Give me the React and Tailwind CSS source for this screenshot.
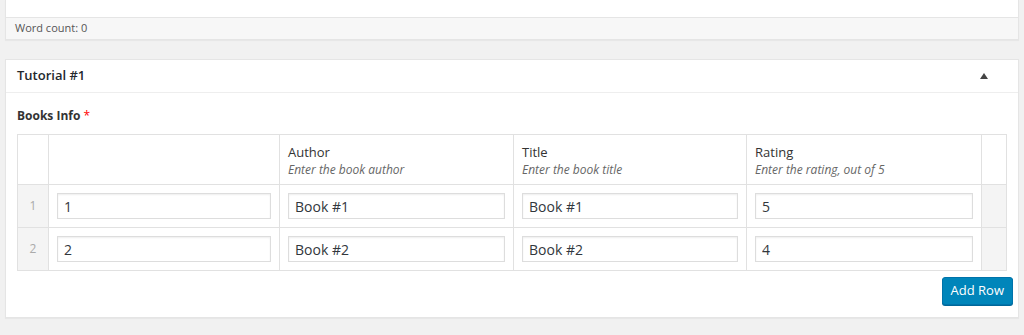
import React from "react";

const font = { fontFamily: '"Open Sans", "Noto Sans", sans-serif' };

function Cell({ value }) {
  return (
    <td className="border border-[#e1e1e1] px-[8px] py-[8px] align-middle">
      <input
        readOnly
        value={value}
        className="w-full h-[26px] border border-[#ddd] bg-white px-[6px] text-[14px] text-[#32373c] shadow-[inset_0_1px_2px_rgba(0,0,0,0.07)] outline-none"
        style={font}
      />
    </td>
  );
}

function HeadCell({ label, desc }) {
  return (
    <th className="border border-[#e1e1e1] px-[8px] pt-[8px] pb-[5px] text-left align-top font-normal bg-white">
      <div className="text-[13px] leading-[18px] text-[#333]">{label}</div>
      <div className="text-[12px] leading-[18px] italic text-[#666]">{desc}</div>
    </th>
  );
}

export default function App() {
  const rows = [
    ["1", "Book #1", "Book #1", "5"],
    ["2", "Book #2", "Book #2", "4"],
  ];
  return (
    <div className="w-[1024px] h-[335px] bg-[#f1f1f1] px-[5px] overflow-hidden" style={font}>
      <div className="bg-white border border-[#e5e5e5] border-t-0 shadow-[0_1px_1px_rgba(0,0,0,0.04)]">
        <div className="h-[17px]" />
        <div className="h-[22px] bg-[#f7f7f7] border-t border-[#e5e5e5] px-[9px] flex items-center text-[11px] text-[#555]">
          Word count: 0
        </div>
      </div>

      <div className="mt-[19px] bg-white border border-[#e5e5e5] shadow-[0_1px_1px_rgba(0,0,0,0.04)]">
        <div className="h-[33px] border-b border-[#eee] pl-[11px] pr-[30px] flex items-center justify-between">
          <span className="text-[13px] font-semibold text-[#23282d]">Tutorial #1</span>
          <span className="w-0 h-0 border-l-[4px] border-r-[4px] border-b-[6px] border-l-transparent border-r-transparent border-b-[#444]" />
        </div>
        <div className="px-[11px] pt-[15px]">
          <div className="text-[12px] font-bold text-[#333] leading-[16px] mb-[10px]">
            Books Info <span className="text-[#f00] font-normal">*</span>
          </div>
          <table className="w-[989px] table-fixed border-collapse border border-[#e1e1e1]">
            <colgroup>
              <col className="w-[31px]" />
              <col className="w-[231px]" />
              <col className="w-[234px]" />
              <col className="w-[233px]" />
              <col className="w-[235px]" />
              <col className="w-[25px]" />
            </colgroup>
            <thead>
              <tr className="h-[50px]">
                <th className="border border-[#e1e1e1] bg-white" />
                <th className="border border-[#e1e1e1] bg-white" />
                <HeadCell label="Author" desc="Enter the book author" />
                <HeadCell label="Title" desc="Enter the book title" />
                <HeadCell label="Rating" desc="Enter the rating, out of 5" />
                <th className="border border-[#e1e1e1] bg-white" />
              </tr>
            </thead>
            <tbody>
              {rows.map((r, i) => (
                <tr key={i}>
                  <td className="border border-[#e1e1e1] bg-[#f4f4f4] text-center text-[12px] text-[#aaa]">{i + 1}</td>
                  {r.map((v, j) => (
                    <Cell key={j} value={v} />
                  ))}
                  <td className="border border-[#e1e1e1] bg-[#f4f4f4]" />
                </tr>
              ))}
            </tbody>
          </table>
        </div>
        <div className="flex justify-end pr-[5px] pt-[6px] pb-[12px]">
          <button className="h-[28px] px-[8px] bg-[#0085ba] border border-[#0073aa] rounded-[3px] shadow-[0_1px_0_#006799] text-white text-[13px]" style={font}>
            Add Row
          </button>
        </div>
      </div>
    </div>
  );
}
